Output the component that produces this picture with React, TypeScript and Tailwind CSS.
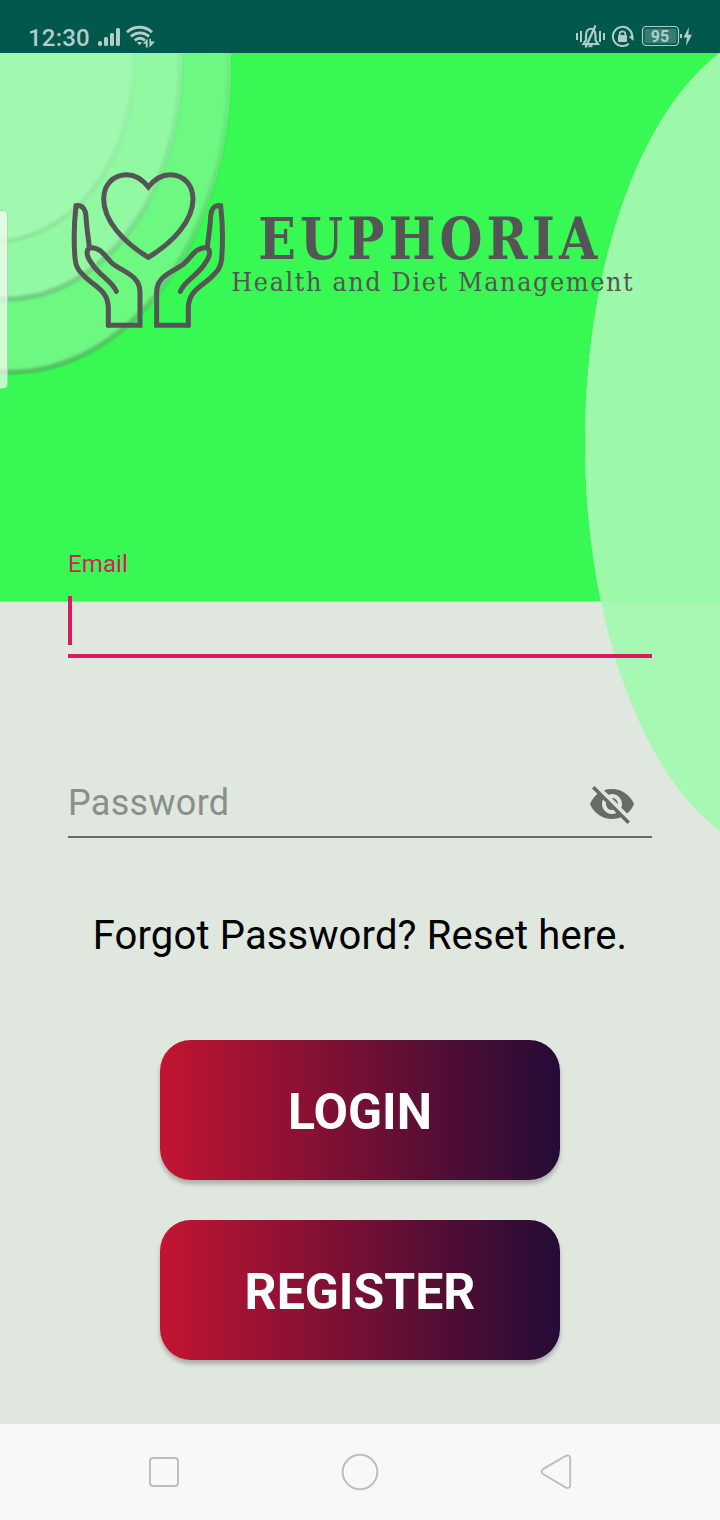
import type { ReactNode } from "react";
import { MdVisibilityOff } from "react-icons/md";

function StatusBar() {
  return (
    <header className="flex h-[53px] shrink-0 items-end justify-between bg-[#00574b] pl-[28px] pr-[27px] text-[#b2cdc9]">
      <div className="flex items-end">
        <span className="w-[69px] text-[24px] font-medium leading-[30px] tracking-[0.2px]">12:30</span>
        <svg width="60" height="29" viewBox="97 24 60 29" fill="currentColor">
          <rect x="98" y="41" width="4" height="5" rx="1.8" />
          <rect x="104" y="37" width="4" height="9" rx="1.5" />
          <rect x="110" y="33" width="4" height="13" rx="1.5" />
          <rect x="116" y="28" width="4" height="18" rx="1.5" />
          <g fill="none" stroke="currentColor" strokeWidth="2.9">
            <path d="M127 32.2C134 25.6 145 25.6 152 32.2" />
            <path d="M131 36.6C136 31.8 144 31.8 149 36.6" />
            <path d="M134.7 40.4C138 37.6 141.5 37.6 145 40.4" />
          </g>
          <path d="M137 42.5Q139.5 40.8 142 42.5L139.5 45.2Z" />
          <path d="M142.6 43.7L147.7 38.8V47.5H145.8V43.7ZM149.4 38.8H151V41.3L155 41.8L149.4 47.4Z" />
        </svg>
      </div>
      <svg width="118" height="29" viewBox="575 24 118 29" fill="none" stroke="currentColor">
        <g strokeWidth="2">
          <path d="M577 33V40M581 31V42M600 31V42M604 33V40" />
          <path d="M583.5 44H598L595.5 40V35.5C595.5 26.5 586 26.5 586 35.5V40L583.5 44Z" strokeWidth="2.2" />
          <path d="M595.5 25.5L585.5 47.5" strokeWidth="2.2" />
          <path d="M588.5 46.2H592.5" />
        </g>
        <path d="M632 38A9.6 9.6 0 1 0 628.8 43.7M631 31.2A9.6 9.6 0 0 1 632 38" strokeWidth="2" />
        <path d="M628.5 36.5L633.5 36V41Z" fill="currentColor" stroke="none" />
        <rect x="618" y="35" width="9" height="7" rx="1" fill="currentColor" stroke="none" />
        <path d="M619.7 36V34.2C619.7 30.5 625.3 30.5 625.3 34.2V36" strokeWidth="1.7" />
        <rect x="642.5" y="26.5" width="36" height="19" rx="4" strokeWidth="1.2" />
        <rect x="644.5" y="28.5" width="32" height="15" rx="2" fill="#377c71" stroke="none" />
        <path d="M681 34V38" strokeWidth="2" />
        <path d="M689 27L683.5 37.5H687L686 46L692 34.8H688.3Z" fill="currentColor" stroke="none" />
        <text x="660" y="42.2" textAnchor="middle" fill="currentColor" stroke="none" className="text-[16px] font-bold">95</text>
      </svg>
    </header>
  );
}

function Backdrop() {
  return (
    <svg className="absolute inset-0" width="720" height="1371" viewBox="0 53 720 1371" aria-hidden="true">
      <defs>
        <linearGradient id="edge" gradientUnits="userSpaceOnUse" x1="0" y1="53" x2="0" y2="374">
          <stop offset="0" stopColor="#3c6b45" stopOpacity="0.08" />
          <stop offset="0.5" stopColor="#3c6b45" stopOpacity="0.22" />
          <stop offset="1" stopColor="#3c6b45" stopOpacity="0.5" />
        </linearGradient>
        <filter id="soft" x="-10%" y="-10%" width="120%" height="120%">
          <feGaussianBlur stdDeviation="1.6" />
        </filter>
        <clipPath id="upper">
          <rect x="0" y="53" width="720" height="548.5" />
        </clipPath>
      </defs>
      <rect x="0" y="53" width="720" height="548.5" fill="#38f953" />
      <ellipse cx="10" cy="70" rx="221" ry="303" fill="#6df882" />
      <ellipse cx="10" cy="70" rx="219" ry="302" fill="none" stroke="url(#edge)" strokeWidth="4" filter="url(#soft)" />
      <ellipse cx="6" cy="66" rx="176" ry="234" fill="#92f9a3" />
      <ellipse cx="6" cy="66" rx="174" ry="233" fill="none" stroke="url(#edge)" strokeWidth="4" filter="url(#soft)" />
      <ellipse cx="-8" cy="66" rx="143" ry="176" fill="#9ff9ae" />
      <ellipse cx="-8" cy="66" rx="141.5" ry="176" fill="none" stroke="url(#edge)" strokeWidth="3.5" strokeOpacity="0.65" filter="url(#soft)" />
      <ellipse cx="792" cy="442" rx="207" ry="415" fill="#a6f8b3" />
      <ellipse cx="792" cy="442" rx="207" ry="415" fill="#9cf9aa" clipPath="url(#upper)" />
    </svg>
  );
}

function Hand() {
  return (
    <>
      <path d="M325 826V775C325 725 290 712 260 685C234 661 227 650 225 625C221 575 222 520 228 467C249 464 257 480 258 498C259 530 265 560 268 592" />
      <path d="M349 724C335 690 300 680 275 640C254 612 260 593 275 593C305 593 318 625 340 643C370 665 420 678 420 725V826H325" />
    </>
  );
}

function Logo() {
  return (
    <svg className="ml-[-8px] h-[180px] w-[600px]" viewBox="180 330 1800 540" role="img" aria-label="Euphoria">
      <g fill="none" stroke="#555555" strokeWidth="15" strokeLinecap="round" strokeLinejoin="miter">
        <path d="M445 411C427 388 408 374 380 374C340 374 311 404 311 447C311 510 368 576 445 622C522 576 579 510 579 447C579 404 550 374 511 374C482 374 463 388 445 411Z" />
        <Hand />
        <g transform="translate(890 0) scale(-1 1)">
          <Hand />
        </g>
      </g>
      <g fill="#555555" fontFamily="'DejaVu Serif Condensed', 'DejaVu Serif', serif" fontStretch="condensed">
        <text transform="translate(775 627) scale(0.94 1)" fontSize="175" fontWeight="700" textLength="1082" lengthAdjust="spacing">EUPHORIA</text>
        <text transform="translate(694 722)" fontSize="80" textLength="1204" lengthAdjust="spacing">Health and Diet Management</text>
      </g>
    </svg>
  );
}

function GradientButton({ children }: { children: ReactNode }) {
  return (
    <button className="h-[140px] w-[400px] rounded-[31px] bg-linear-to-r/srgb from-[#c31432] to-[#240b36] pt-1 text-[50px] font-bold leading-none text-white shadow-[0_4px_4px_rgba(0,0,0,0.24)]">
      {children}
    </button>
  );
}

function NavBar() {
  return (
    <nav className="flex h-24 shrink-0 items-center justify-between bg-[#f8f8f8] px-[144px]">
      {[
        <rect key="s" x="6" y="6" width="28" height="28" rx="3" />,
        <circle key="c" cx="20" cy="20" r="17.3" />,
        <path key="t" d="M29.9 3.8L7.4 16.9Q3.6 19.6 7.4 22.3L29.9 35.6Q34 37 34.2 33V6.4Q34 2.4 29.9 3.8Z" />,
      ].map((shape, i) => (
        <svg key={i} width="40" height="40" viewBox="0 0 40 40" fill="none" stroke="#bdbdbd" strokeWidth="1.9">
          {shape}
        </svg>
      ))}
    </nav>
  );
}

export default function App() {
  return (
    <div className="flex h-[1520px] w-[720px] flex-col overflow-hidden font-['Roboto',sans-serif]">
      <StatusBar />
      <main className="relative h-[1371px] bg-[#e0e7df]">
        <Backdrop />
        <div className="relative flex flex-col px-[68px] pt-[107px]">
          <Logo />
          <label className="mt-[209px] flex h-[109px] flex-col border-b-4 border-[#d81b60]">
            <span className="text-[24px] leading-[30px] tracking-[0.1px] text-[#d81b60]">Email</span>
            <span className="mt-[17px] h-[49px] w-1 bg-[#d81b60]" />
          </label>
          <label className="mt-[110px] flex h-[70px] items-center justify-between border-b-2 border-[#666c67] pr-4">
            <span className="pt-[2px] text-[36px] leading-[42px] tracking-[0.3px] text-[#8a8f8a]">Password</span>
            <MdVisibilityOff className="mt-1 size-12 text-[#666c67]" />
          </label>
          <p className="mt-[74px] text-center text-[40px] leading-[48px] tracking-[0.15px] text-black">Forgot Password? Reset here.</p>
          <div className="mt-[80px] flex flex-col items-center gap-10">
            <GradientButton>LOGIN</GradientButton>
            <GradientButton>REGISTER</GradientButton>
          </div>
        </div>
        <div className="absolute left-[-4px] top-[157px] h-[179px] w-[12px] rounded-[5px] border border-[#9bb8a0]/60 bg-white/65" />
      </main>
      <NavBar />
    </div>
  );
}
